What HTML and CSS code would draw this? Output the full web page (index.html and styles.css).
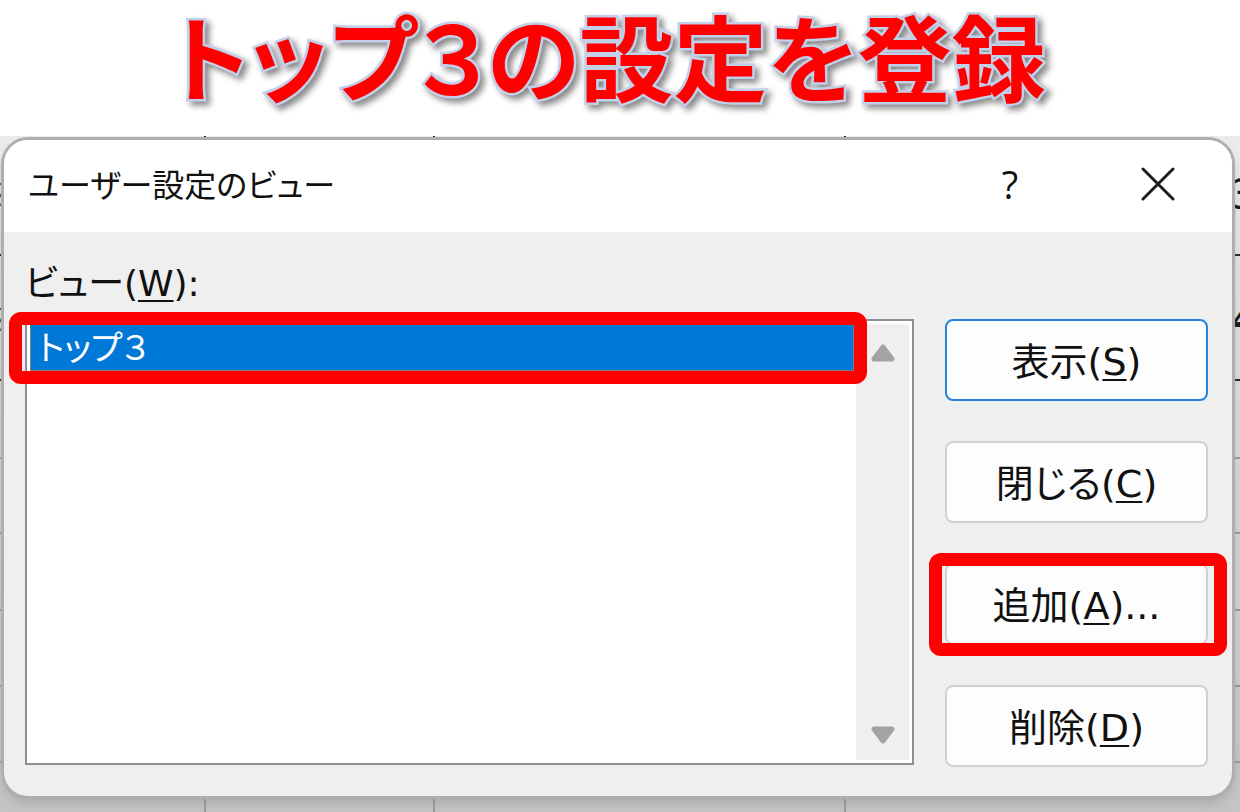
FILE: index.html
```html
<!DOCTYPE html>
<html lang="ja">
<head>
<meta charset="utf-8">
<meta name="viewport" content="width=device-width, initial-scale=1">
<title>トップ３の設定を登録</title>
<link rel="stylesheet" href="styles.css">
</head>
<body>
<header class="banner"><h1 class="banner-title">トップ３の設定を登録</h1></header>
<main class="sheet">
  <svg class="grid" width="100%" height="100%" aria-hidden="true">
    <g stroke="#999" stroke-width="2">
      <path d="M0 322H3000M0 397H3000M0 474H3000M0 550H3000M0 626H3000"/>
      <path d="M205 244V2000M434 244V2000M845 244V2000"/>
    </g>
    <path d="M205 0V244M434 0V244M845 0V244M0 119H3000M0 244H3000M1200 187H3000" stroke="#222" stroke-width="2"/>
    <path d="M0 48H4M0 61Q3 55 5 53M0 68Q3 71 5 72M0 173H4M0 186Q3 180 5 178M0 193Q3 196 5 197" stroke="#3d505c" stroke-width="2" fill="none"/>
  </svg>
  <div class="cells" aria-hidden="true"><span>3</span><span>4</span></div>
  <section class="dialog" role="dialog" aria-labelledby="dialog-title">
    <div class="titlebar">
      <h2 class="dialog-title" id="dialog-title">ユーザー設定のビュー</h2>
      <button class="tool help" type="button">?</button>
      <button class="tool" type="button" aria-label="閉じる">
        <svg width="34" height="34" viewBox="0 0 34 34"><path d="M2 2L32 32M32 2L2 32" stroke="#1c1c1c" stroke-width="3" stroke-linecap="round"/></svg>
      </button>
    </div>
    <div class="content">
      <div class="label" id="view-label">ビュー(<u>W</u>):</div>
      <div class="columns">
        <div class="listbox">
          <ul class="items" role="listbox" aria-labelledby="view-label">
            <li class="item" role="option" aria-selected="true">トップ３</li>
          </ul>
          <div class="scrollbar">
            <button class="arrow" type="button" aria-label="上へ"><svg width="24" height="18" viewBox="0 0 24 18"><path d="M12 3L21 15H3Z" fill="#a3a3a3" stroke="#a3a3a3" stroke-width="5" stroke-linejoin="round"/></svg></button>
            <button class="arrow" type="button" aria-label="下へ"><svg width="24" height="18" viewBox="0 0 24 18"><path d="M12 15L21 3H3Z" fill="#a3a3a3" stroke="#a3a3a3" stroke-width="5" stroke-linejoin="round"/></svg></button>
          </div>
          <div class="marker marker-item"></div>
        </div>
        <div class="actions">
          <button class="action primary" type="button">表示(<u>S</u>)</button>
          <button class="action" type="button">閉じる(<u>C</u>)</button>
          <div class="marked"><button class="action" type="button">追加(<u>A</u>)...</button><div class="marker marker-action"></div></div>
          <button class="action" type="button">削除(<u>D</u>)</button>
        </div>
      </div>
    </div>
  </section>
</main>
</body>
</html>
```
FILE: styles.css
```css
* { box-sizing: border-box; }
body {
  margin: 0;
  min-height: 100vh;
  display: flex;
  flex-direction: column;
  background: #fff;
  color: #111;
  font: 38px/48px "DejaVu Sans", "Noto Sans CJK JP", sans-serif;
  font-feature-settings: "palt";
}
button { font: inherit; font-feature-settings: inherit; color: inherit; padding: 0; }
u { text-decoration-thickness: 2px; text-underline-offset: 4px; }
.banner { height: 136px; text-align: center; }
.banner-title {
  margin: 0;
  padding-right: 24px;
  font-family: "Noto Sans CJK JP", sans-serif;
  font-size: 94px;
  line-height: 108px;
  font-weight: 700;
  color: #f00;
  white-space: nowrap;
  -webkit-text-stroke: 5px #c3d0ea;
  paint-order: stroke fill;
  filter: drop-shadow(4px 4px 3px #888);
}
.sheet {
  position: relative;
  flex: 1;
  display: flex;
  padding: 4px 8px 16px 4px;
  background: linear-gradient(#ececec, #c4c4c4);
  overflow: hidden;
}
.grid { position: absolute; inset: 0; }
.cells { position: absolute; right: -16px; top: 32px; display: grid; row-gap: 77px; font-family: "Noto Sans", sans-serif; font-size: 44px; }
.dialog {
  position: relative;
  flex: 1;
  display: flex;
  flex-direction: column;
  border-radius: 24px;
  background: #efefef;
  box-shadow: 0 0 0 3px #aeaeae, 0 6px 12px #8888;
  overflow: hidden;
}
.titlebar { display: flex; align-items: center; height: 92px; padding: 0 42px 4px 24px; background: #fff; }
.dialog-title { flex: 1; margin: 0; padding-top: 4px; font-size: 32px; font-weight: 400; }
.tool { display: flex; justify-content: center; align-items: center; width: 64px; height: 64px; border: 0; background: none; }
.help { margin-right: 84px; font-family: "Open Sans", sans-serif; }
.content { flex: 1; display: flex; flex-direction: column; padding: 28px 24px 31px 21px; }
.label { height: 59px; font-size: 36px; }
.columns { flex: 1; display: flex; gap: 31px; }
.listbox { position: relative; flex: 1; display: flex; padding: 3px; border: 2px solid #8b8f98; background: #fff; }
.items { flex: 1; margin: 0; padding: 0; list-style: none; }
.item { height: 47px; margin-right: 2px; padding-left: 8px; font-size: 34px; background: #0078d7; color: #fff; outline: 1px dotted #f08020; outline-offset: -1px; }
.scrollbar { display: flex; flex-direction: column; justify-content: space-between; width: 53px; padding: 20px 0 16px; background: #efefef; }
.arrow { display: flex; justify-content: center; border: 0; background: none; }
.actions { display: flex; flex-direction: column; justify-content: space-between; width: 263px; margin-bottom: -2px; }
.action { width: 100%; height: 82px; padding-top: 4px; border: 2px solid #d0d0d0; border-radius: 8px; background: #fdfdfd; }
.primary { border-color: #2586d8; }
.marked { position: relative; display: flex; }
.marker { position: absolute; border: 13px solid #f00; border-radius: 12px; pointer-events: none; }
.marker-item { left: -18px; right: 45px; top: -9px; height: 72px; }
.marker-action { inset: -10px -19px -11px -16px; }
```
